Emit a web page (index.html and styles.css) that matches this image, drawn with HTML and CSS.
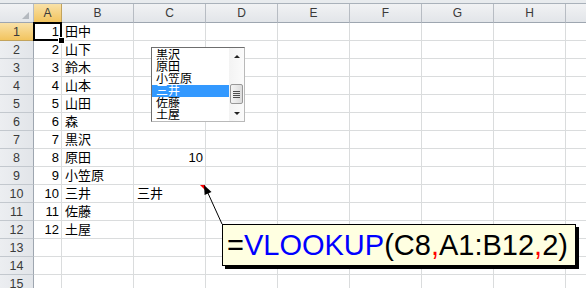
FILE: index.html
```html
<!DOCTYPE html>
<html lang="ja">
<head>
<meta charset="utf-8">
<title>VLOOKUP</title>
<link rel="stylesheet" href="styles.css">
</head>
<body>
<div class="sheet">
  <div class="topbar"></div>
  <div class="grid">
    <div class="corner"></div><div class="ch sel">A</div><div class="ch">B</div><div class="ch">C</div><div class="ch">D</div><div class="ch">E</div><div class="ch">F</div><div class="ch">G</div><div class="ch">H</div><div class="ch">I</div>

    <div class="rh sel">1</div><div class="c n">1</div><div class="c t">田中</div><div class="c"></div><div class="c"></div><div class="c"></div><div class="c"></div><div class="c"></div><div class="c"></div><div class="c"></div>
    <div class="rh">2</div><div class="c n">2</div><div class="c t">山下</div><div class="c"></div><div class="c"></div><div class="c"></div><div class="c"></div><div class="c"></div><div class="c"></div><div class="c"></div>
    <div class="rh">3</div><div class="c n">3</div><div class="c t">鈴木</div><div class="c"></div><div class="c"></div><div class="c"></div><div class="c"></div><div class="c"></div><div class="c"></div><div class="c"></div>
    <div class="rh">4</div><div class="c n">4</div><div class="c t">山本</div><div class="c"></div><div class="c"></div><div class="c"></div><div class="c"></div><div class="c"></div><div class="c"></div><div class="c"></div>
    <div class="rh">5</div><div class="c n">5</div><div class="c t">山田</div><div class="c"></div><div class="c"></div><div class="c"></div><div class="c"></div><div class="c"></div><div class="c"></div><div class="c"></div>
    <div class="rh">6</div><div class="c n">6</div><div class="c t">森</div><div class="c"></div><div class="c"></div><div class="c"></div><div class="c"></div><div class="c"></div><div class="c"></div><div class="c"></div>
    <div class="rh">7</div><div class="c n">7</div><div class="c t">黒沢</div><div class="c"></div><div class="c"></div><div class="c"></div><div class="c"></div><div class="c"></div><div class="c"></div><div class="c"></div>
    <div class="rh">8</div><div class="c n">8</div><div class="c t">原田</div><div class="c n">10</div><div class="c"></div><div class="c"></div><div class="c"></div><div class="c"></div><div class="c"></div><div class="c"></div>
    <div class="rh">9</div><div class="c n">9</div><div class="c t">小笠原</div><div class="c"></div><div class="c"></div><div class="c"></div><div class="c"></div><div class="c"></div><div class="c"></div><div class="c"></div>
    <div class="rh">10</div><div class="c n">10</div><div class="c t">三井</div><div class="c t">三井</div><div class="c"></div><div class="c"></div><div class="c"></div><div class="c"></div><div class="c"></div><div class="c"></div>
    <div class="rh">11</div><div class="c n">11</div><div class="c t">佐藤</div><div class="c"></div><div class="c"></div><div class="c"></div><div class="c"></div><div class="c"></div><div class="c"></div><div class="c"></div>
    <div class="rh">12</div><div class="c n">12</div><div class="c t">土屋</div><div class="c"></div><div class="c"></div><div class="c"></div><div class="c"></div><div class="c"></div><div class="c"></div><div class="c"></div>
    <div class="rh">13</div><div class="c"></div><div class="c"></div><div class="c"></div><div class="c"></div><div class="c"></div><div class="c"></div><div class="c"></div><div class="c"></div><div class="c"></div>
    <div class="rh">14</div><div class="c"></div><div class="c"></div><div class="c"></div><div class="c"></div><div class="c"></div><div class="c"></div><div class="c"></div><div class="c"></div><div class="c"></div>
    <div class="rh">15</div><div class="c"></div><div class="c"></div><div class="c"></div><div class="c"></div><div class="c"></div><div class="c"></div><div class="c"></div><div class="c"></div><div class="c"></div>
  </div>

  <div class="selection"><div class="handle"></div></div>

  <div class="listbox">
    <div class="items">
      <div class="item">黒沢</div>
      <div class="item">原田</div>
      <div class="item">小笠原</div>
      <div class="item on">三井</div>
      <div class="item">佐藤</div>
      <div class="item">土屋</div>
    </div>
    <div class="vscroll">
      <div class="btn"><span class="tri up"></span></div>
      <div class="track"><div class="thumb"><span class="grip"></span></div></div>
      <div class="btn"><span class="tri down"></span></div>
    </div>
  </div>

  <svg class="pointer" width="586" height="288" viewBox="0 0 586 288">
    <polygon points="200,185 205,185 205,190" fill="#ff0000"/>
    <line x1="222" y1="224" x2="207" y2="191" stroke="#000" stroke-width="1"/>
    <polygon points="204,185 211.5,192 204.6,195" fill="#000"/>
  </svg>

  <div class="callout"><span>=</span><span class="fn">VLOOKUP</span>(C8<span class="sep">,</span>A1:B12<span class="sep">,</span>2)</div>
</div>
</body>
</html>
```

FILE: styles.css
```css
body {
  margin: 0;
  background: #ffffff;
}

.sheet {
  position: relative;
  width: 586px;
  height: 288px;
  overflow: hidden;
  font-family: "Liberation Sans", "Noto Sans CJK JP", sans-serif;
  color: #000;
}

.topbar {
  height: 3px;
  background: #e8ebee;
  border-bottom: 1px solid #a9b1ba;
}

.grid {
  display: grid;
  grid-template-columns: 34px 28px repeat(8, 72px);
  grid-template-rows: 19px repeat(15, 18px);
}

.grid > div {
  box-sizing: border-box;
  border-right: 1px solid #dadcdd;
  border-bottom: 1px solid #dadcdd;
  display: flex;
  align-items: flex-end;
  overflow: hidden;
  white-space: nowrap;
  font-size: 13px;
  line-height: 14px;
  padding-bottom: 1px;
}

.grid > .corner {
  background: linear-gradient(#f1f2f4, #e2e5e9);
  border-right-color: #b7bcc3;
  border-bottom-color: #9ea6b0;
  position: relative;
}

.corner::after {
  content: "";
  position: absolute;
  right: 4px;
  bottom: 3px;
  width: 0;
  height: 0;
  border-left: 7px solid transparent;
  border-bottom: 7px solid #b4b9bf;
}

.grid > .ch {
  background: linear-gradient(#f1f2f4, #e2e5e9);
  border-right-color: #b7bcc3;
  border-bottom-color: #9ea6b0;
  justify-content: center;
  align-items: center;
  padding-bottom: 0;
  color: #3a3a3a;
  font-size: 12px;
}

.grid > .rh {
  background: linear-gradient(90deg, #eceef1, #e2e5e9);
  border-right-color: #9ea6b0;
  border-bottom-color: #c3c8ce;
  justify-content: center;
  color: #3a3a3a;
  font-size: 12.5px;
}

.grid > .sel {
  background: linear-gradient(#f9e1a8, #f2c45e);
  border-right-color: #c2a35c;
  border-bottom-color: #c2a35c;
}

.grid > .n {
  justify-content: flex-end;
  padding-right: 2px;
}

.grid > .t {
  padding-left: 3px;
}

.selection {
  position: absolute;
  left: 33px;
  top: 22px;
  width: 25px;
  height: 15px;
  border: 2px solid #000;
}

.handle {
  position: absolute;
  right: -5px;
  bottom: -5px;
  width: 5px;
  height: 5px;
  background: #000;
  border: 1px solid #fff;
}

.listbox {
  position: absolute;
  left: 151px;
  top: 47px;
  width: 94px;
  height: 75px;
  box-sizing: border-box;
  border: 1px solid #b9b9b9;
  border-left-color: #6e6e6e;
  border-top-color: #6e6e6e;
  background: #fff;
  display: flex;
}

.items {
  flex: 1;
  padding-top: 1px;
  overflow: hidden;
}

.item {
  height: 12px;
  line-height: 12px;
  font-size: 12px;
  padding-left: 4px;
  overflow: hidden;
  white-space: nowrap;
}

.item.on {
  background: #3399ff;
  color: #fff;
}

.vscroll {
  width: 15px;
  display: flex;
  flex-direction: column;
  background: linear-gradient(90deg, #f3f3f3, #fbfbfb);
}

.btn {
  height: 16px;
  display: flex;
  align-items: center;
  justify-content: center;
}

.tri {
  width: 0;
  height: 0;
  border-left: 3px solid transparent;
  border-right: 3px solid transparent;
}

.tri.up {
  border-bottom: 3px solid #222;
}

.tri.down {
  border-top: 3px solid #222;
}

.track {
  flex: 1;
  display: flex;
  flex-direction: column;
  justify-content: flex-end;
  padding-bottom: 1px;
}

.thumb {
  height: 20px;
  margin: 0 1px;
  box-sizing: border-box;
  border: 1px solid #989898;
  border-radius: 2px;
  background: linear-gradient(90deg, #f4f4f4, #dcdcdc);
  display: flex;
  align-items: center;
  justify-content: center;
}

.grip {
  width: 7px;
  height: 7px;
  background: repeating-linear-gradient(#4e4e4e 0 1px, transparent 1px 2px);
}

.pointer {
  position: absolute;
  left: 0;
  top: 0;
  pointer-events: none;
}

.callout {
  position: absolute;
  left: 222px;
  top: 224px;
  width: 354px;
  height: 42px;
  box-sizing: border-box;
  border: 1px solid #000;
  background: #ffffe1;
  box-shadow: 3px 3px 0 #000;
  padding: 1px 0 0 4px;
  font-family: "Liberation Sans", Arial, sans-serif;
  font-size: 29px;
  line-height: 39px;
  white-space: nowrap;
  color: #000;
}

.fn {
  color: #0000ff;
}

.sep {
  color: #ff0000;
}
```
